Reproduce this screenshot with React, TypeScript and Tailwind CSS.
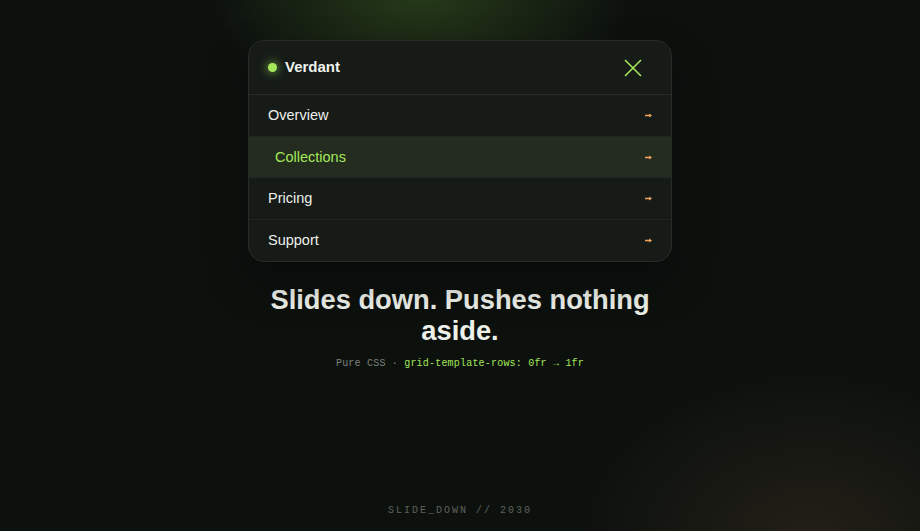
import { useState } from "react";

const items = ["Overview", "Collections", "Pricing", "Support"];

export default function App() {
  const [active, setActive] = useState("Collections");

  return (
    <div
      className="relative min-h-screen h-[531px] overflow-hidden bg-[#0d110e] flex flex-col items-center pt-10"
      style={{ fontFamily: '"Liberation Sans", Arial, sans-serif' }}
    >
      {/* background glows */}
      <div className="pointer-events-none absolute -top-[140px] left-[210px] w-[420px] h-[260px] rounded-full bg-[radial-gradient(closest-side,rgba(70,110,40,0.45),rgba(70,110,40,0))]" />
      <div className="pointer-events-none absolute -bottom-[180px] -right-[120px] w-[460px] h-[340px] rounded-full bg-[radial-gradient(closest-side,rgba(80,62,42,0.32),rgba(80,62,42,0))]" />

      {/* menu card */}
      <div className="relative w-[424px] rounded-2xl border border-[#262c27] bg-[#161b18] overflow-hidden shadow-[0_20px_40px_rgba(0,0,0,0.35)]">
        <div className="flex items-center justify-between h-[54px] pl-[19px] pr-5 border-b border-[#262c27]">
          <div className="flex items-center gap-2">
            <span className="w-[9px] h-[9px] rounded-full bg-[#a5e85a] shadow-[0_0_8px_2px_rgba(165,232,90,0.45)]" />
            <span className="text-[15px] font-bold text-[#f1f3ee]">Verdant</span>
          </div>
          <button className="mr-[8px] text-[#a5e85a]">
            <svg width="20" height="20" viewBox="0 0 20 20" fill="none" stroke="currentColor" strokeWidth="1.6">
              <path d="M2 2 L18 18 M18 2 L2 18" />
            </svg>
          </button>
        </div>
        <div className="flex flex-col">
          {items.map((item, i) => {
            const on = item === active;
            return (
              <button
                key={item}
                onClick={() => setActive(item)}
                className={`flex items-center justify-between h-[41.5px] pt-[2px] pr-[19px] text-left text-[14.5px] ${
                  i < items.length - 1 ? "border-b border-[#1f2520]" : ""
                } ${on ? "bg-[#232c1f] text-[#a5e85a] pl-[26px]" : "text-[#eef0ea] pl-[19px]"}`}
              >
                <span>{item}</span>
                {/* tiny arrow */}
                <svg width="7" height="5" viewBox="0 0 7 5" className="text-[#f4a55c] -mt-[1px]">
                  <path d="M0 2.5 H5.5" stroke="currentColor" strokeWidth="1.3" />
                  <path d="M4.2 0.5 L7 2.5 L4.2 4.5 Z" fill="currentColor" />
                </svg>
              </button>
            );
          })}
        </div>
      </div>

      <h1 className="mt-[22px] w-[424px] text-center text-[27.3px] leading-[31px] font-bold text-[#eef1ea]">
        Slides down. Pushes nothing aside.
      </h1>
      <p
        className="mt-[10px] text-[10px] tracking-[0.2px] text-[#7d827c]"
        style={{ fontFamily: '"Liberation Mono", "Courier New", monospace' }}
      >
        Pure CSS · <span className="text-[#a5e85a]">grid-template-rows: 0fr → 1fr</span>
      </p>

      <div
        className="mt-auto mb-[13px] text-[10px] tracking-[0.2em] text-[#5d625d]"
        style={{ fontFamily: '"Liberation Mono", "Courier New", monospace' }}
      >
        SLIDE_DOWN // 2030
      </div>
    </div>
  );
}
